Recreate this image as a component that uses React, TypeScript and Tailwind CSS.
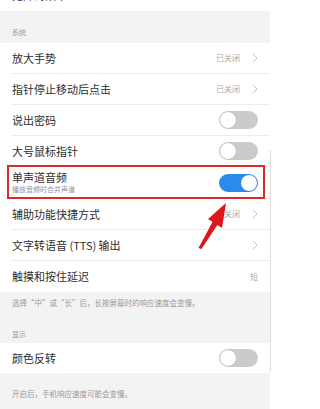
import type { ReactNode } from "react";

const font = { fontFamily: '"Noto Sans CJK SC", "Noto Sans", sans-serif' };

const Chevron = () => (
  <svg width="6" height="10" viewBox="0 0 6 10" className="ml-[12px]">
    <polyline points="1,1 5,5 1,9" fill="none" stroke="#c4c4c4" strokeWidth="1" />
  </svg>
);

const Toggle = ({ on = false }: { on?: boolean }) => (
  <div
    className={`flex h-[18px] w-[39px] items-center rounded-full px-[1px] ${
      on ? "justify-end bg-[#2a8bec]" : "justify-start bg-[#cbcbcb]"
    }`}
  >
    <div className="h-[16px] w-[16px] rounded-full bg-white shadow-[0_0_1px_rgba(0,0,0,0.3)]" />
  </div>
);

const Row = ({
  title,
  sub,
  right,
  h = "h-[31px]",
  last = false,
  children,
}: {
  title: string;
  sub?: string;
  right?: ReactNode;
  h?: string;
  last?: boolean;
  children?: ReactNode;
}) => (
  <div className={`relative bg-white pl-[12px] ${h}`}>
    <div
      className={`flex h-full items-center pr-[12px] ${last ? "" : "border-b border-[#ececec]"}`}
    >
      <div className="flex flex-1 flex-col">
        <span className="text-[11px] leading-[13px] text-[#2e2e2e]">{title}</span>
        {sub && <span className="mt-[1px] text-[7px] leading-[9px] text-[#8a95a8]">{sub}</span>}
      </div>
      {right}
    </div>
    {children}
  </div>
);

const Value = ({ text, chevron = true }: { text: string; chevron?: boolean }) => (
  <div className="flex items-center">
    <span className="text-[8px] text-[#a8a8a8]">{text}</span>
    {chevron && <Chevron />}
  </div>
);

export default function App() {
  return (
    <div className="relative flex h-[409px] w-[283px] overflow-hidden bg-white" style={font}>
      <div className="flex w-[270px] flex-col bg-[#f3f3f3]">
        {/* partially scrolled row */}
        <div className="mt-[-20px]">
          <Row title="无障碍菜单" right={<Value text="已关闭" />} last />
        </div>

        <div className="flex h-[32px] items-end pb-[6px] pl-[12px]">
          <span className="text-[7px] text-[#9a9a9a]">系统</span>
        </div>

        <Row title="放大手势" right={<Value text="已关闭" />} />
        <Row title="指针停止移动后点击" right={<Value text="已关闭" />} />
        <Row title="说出密码" right={<Toggle />} />
        <Row title="大号鼠标指针" right={<Toggle />} />
        <Row title="单声道音频" sub="播放音频时合并声道" right={<Toggle on />} h="h-[32px]">
          <div className="absolute bottom-0 left-[7px] right-[5px] top-[-2px] border-2 border-[#d92a2c]" />
        </Row>
        <Row title="辅助功能快捷方式" right={<Value text="已关闭" />} />
        <Row title="文字转语音 (TTS) 输出" right={<Chevron />} />
        <Row title="触摸和按住延迟" right={<Value text="短" chevron={false} />} last />

        <div className="flex h-[51px] flex-col pl-[12px]">
          <span className="mt-[5px] text-[7.5px] text-[#9a9a9a]">
            选择“中”或“长”后，长按屏幕时的响应速度会变慢。
          </span>
          <span className="mt-[21px] text-[7px] text-[#9a9a9a]">显示</span>
        </div>

        <Row title="颜色反转" right={<Toggle />} h="h-[30px]" last />

        <div className="pl-[12px] pt-[5px]">
          <span className="text-[7.5px] text-[#9a9a9a]">开启后，手机响应速度可能会变慢。</span>
        </div>
      </div>

      <div className="w-[13px] bg-white">
        <div className="mt-[150px] h-[222px] border-l border-[#dedede]" />
      </div>

      {/* annotation arrow */}
      <svg className="pointer-events-none absolute left-0 top-0" width="283" height="409">
        <polygon points="198.5,248 201.5,249 218,224 213,221" fill="#e0161c" />
        <polygon points="226,203 208,219 222,228" fill="#e0161c" />
      </svg>
    </div>
  );
}
